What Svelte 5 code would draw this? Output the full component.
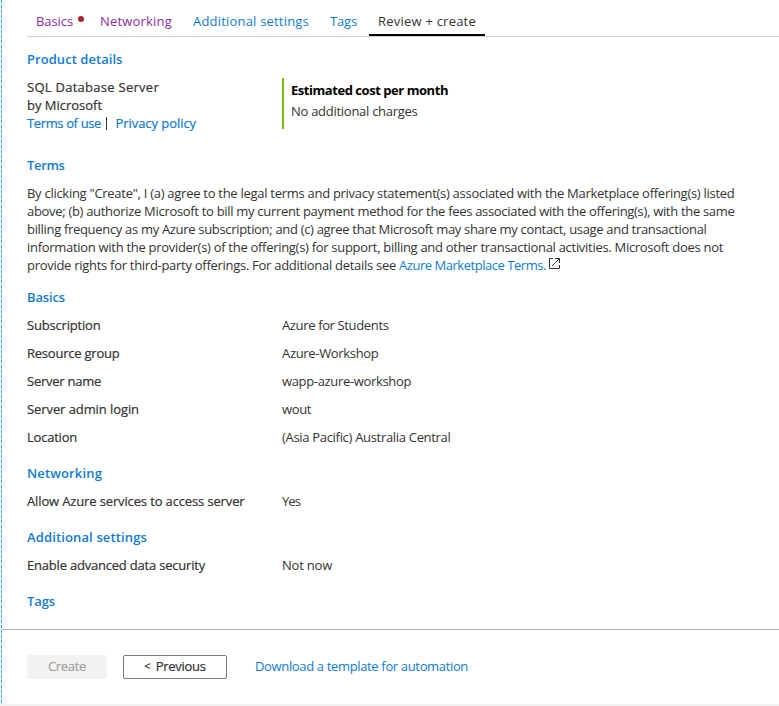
<script>
  const tabs = [
    { label: 'Basics', w: 37, visited: true, alert: true },
    { label: 'Networking', w: 72, visited: true },
    { label: 'Additional settings', w: 116 },
    { label: 'Tags', w: 27 },
    { label: 'Review + create', w: 98, active: true }
  ];
  const terms = [
    ['By clicking "Create", I (a) agree to the legal terms and privacy statement(s) associated with the Marketplace offering(s) listed', 707.5],
    ['above; (b) authorize Microsoft to bill my current payment method for the fees associated with the offering(s), with the same', 707.5],
    ['billing frequency as my Azure subscription; and (c) agree that Microsoft may share my contact, usage and transactional', 679.5],
    ['information with the provider(s) of the offering(s) for support, billing and other transactional activities. Microsoft does not', 696]
  ];
  const sections = [
    { title: 'Basics', w: 38, rows: [
      ['Subscription', 73.5, 'Azure for Students', 106.5],
      ['Resource group', 92.5, 'Azure-Workshop', 96.5],
      ['Server name', 74, 'wapp-azure-workshop', 129],
      ['Server admin login', 112, 'wout', 29],
      ['Location', 50, '(Asia Pacific) Australia Central', 168.5]
    ] },
    { title: 'Networking', w: 75, rows: [['Allow Azure services to access server', 217.5, 'Yes', 18]] },
    { title: 'Additional settings', w: 120, rows: [['Enable advanced data security', 178, 'Not now', 50]] },
    { title: 'Tags', w: 28, rows: [] }
  ];

  // Adjusts tracking so that a run of text takes the given width.
  function fit(node, width) {
    const apply = () => {
      node.style.letterSpacing = '0px';
      const natural = node.getBoundingClientRect().width;
      node.style.letterSpacing = (width - natural) / node.textContent.length + 'px';
    };
    apply();
    document.fonts?.ready.then(apply);
  }
</script>

<div class="blade">
  <nav>
    {#each tabs as t}
      <div class="tab" class:visited={t.visited} class:active={t.active}>
        <span use:fit={t.w}>{t.label}</span>
        {#if t.alert}<i class="dot"></i>{/if}
      </div>
    {/each}
  </nav>

  <main>
    <h2><span use:fit={95.5}>Product details</span></h2>
    <div class="product">
      <div class="name">
        <div><span use:fit={132}>SQL Database Server</span></div>
        <div><span use:fit={75}>by Microsoft</span></div>
        <div class="links"><a href="#terms" use:fit={74}>Terms of use</a><b class="bar"></b><a href="#privacy" use:fit={80.5}>Privacy policy</a></div>
      </div>
      <div class="cost">
        <div class="strong"><span use:fit={157}>Estimated cost per month</span></div>
        <div><span use:fit={126.5}>No additional charges</span></div>
      </div>
    </div>

    <h2 class="termshead"><span use:fit={37.5}>Terms</span></h2>
    <div class="terms">
      {#each terms as [line, w]}
        <div><span use:fit={w}>{line}</span></div>
      {/each}
      <div class="last">
        <span use:fit={369}>provide rights for third-party offerings. For additional details see</span>
        <a href="#marketplace" use:fit={147}>Azure Marketplace Terms.</a>
        <svg width="11" height="11" viewBox="0 0 11 11" fill="none" stroke="#333"><path d="M4 .5H.5v10h10V7M6 .5h4.5V5M10.3.7 3 8" /></svg>
      </div>
    </div>

    {#each sections as s}
      <section>
        <h2><span use:fit={s.w}>{s.title}</span></h2>
        {#each s.rows as [label, lw, value, vw]}
          <div class="row">
            <div class="label"><span use:fit={lw}>{label}</span></div>
            <div><span use:fit={vw}>{value}</span></div>
          </div>
        {/each}
      </section>
    {/each}
  </main>

  <footer>
    <button class="create" disabled><span use:fit={38}>Create</span></button>
    <button class="prev"><small>&lt;</small><span use:fit={50}>Previous</span></button>
    <a href="#template" use:fit={213}>Download a template for automation</a>
  </footer>
</div>

<style>
  :global(body) { margin: 0; background: #fff; }
  .blade {
    box-sizing: border-box; width: 779px; height: 706px; overflow: hidden;
    display: flex; flex-direction: column;
    font: 13px/18px "Open Sans", "Noto Sans", sans-serif; color: #333;
    border-bottom: 2px solid #f1f1f1;
    padding-left: 2px;
    background: repeating-linear-gradient(to bottom, #1fb0ea 0 3px, #dcdcdc 3px 5px) 1px 0 / 1px 100% no-repeat #fff;
  }
  span, a { display: inline-block; white-space: nowrap; }
  a { color: #0f7bd4; text-decoration: none; }
  nav { display: flex; box-sizing: border-box; height: 37px; flex: none; margin-left: 25px; border-bottom: 1px solid #cfcfcf; padding-top: 12px; }
  .tab { display: flex; box-sizing: border-box; height: 24px; color: #0f7bd4; padding: 0 9px; margin-right: 3px; }
  .tab.visited { color: #8a2da5; }
  .tab:first-child { margin-right: -1px; }
  .tab.active { color: #333; border-bottom: 2px solid #000; }
  .dot { width: 6px; height: 6px; border-radius: 50%; background: #a4262c; margin: 4px -1px 0 5px; }
  main { margin: 13px 0 0 25px; height: 579px; flex: none; }
  h2 { margin: 0; font-size: 13px; line-height: 18px; font-weight: 600; color: #0f7bd4; }
  .product { display: flex; margin-top: 10px; height: 54px; }
  .name, .label { width: 255px; -webkit-text-stroke: 0.2px currentColor; }
  .links { display: flex; align-items: center; }
  .bar { width: 1px; height: 13px; background: #333; margin: 0 9px 0 4.5px; }
  .cost { border-left: 2px solid #7fba00; padding: 3px 0 0 7px; height: 48px; line-height: 23px; }
  .strong { font-weight: 700; color: #000; line-height: 19px; }
  .termshead { margin-top: 24px; }
  .terms { margin: 10px 0 14px; }
  .last { display: flex; gap: 3px; }
  .last svg { margin: 2px 0 0; }
  section { margin-bottom: 18px; }
  .row { display: flex; margin-top: 10px; }
  footer { display: flex; align-items: flex-start; border-top: 1px solid #b5b5b5; padding: 25px 0 0 25px; line-height: 22px; }
  button { box-sizing: border-box; height: 24px; padding: 0 0 2px; border-radius: 2px; font: 13px/20px "Open Sans", "Noto Sans", sans-serif; -webkit-text-stroke: 0.2px currentColor; display: flex; align-items: center; justify-content: center; }
  .create { width: 80px; border: 1px solid #f3f2f1; background: #f3f2f1; color: #a19f9d; }
  .prev { width: 104px; margin: 0 28px 0 16px; border: 1px solid #777; background: #fff; color: #333; }
  .prev small { font-size: 11px; margin-right: 5px; }
</style>
